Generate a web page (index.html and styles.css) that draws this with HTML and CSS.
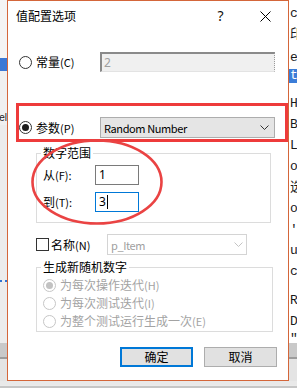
FILE: index.html
```html
<!DOCTYPE html>
<html lang="zh-CN">
<head>
<meta charset="utf-8">
<title>值配置选项</title>
<link rel="stylesheet" href="styles.css">
</head>
<body>
<div class="screen">
  <div class="bg-left">
    <div class="bl-top"></div>
    <div class="bl-sel"></div>
    <div class="bl-gap"></div>
    <div class="bl-text"><span>el</span></div>
    <div class="bl-fill"></div>
    <div class="bl-dots"></div>
    <div class="bl-fill2"></div>
    <div class="bl-bar"></div>
    <div class="bl-line"></div>
    <div class="bl-rest"></div>
  </div>

  <div class="dialog">
    <div class="titlebar">
      <span class="title">值配置选项</span>
      <span class="tb-btn help">?</span>
      <span class="tb-btn">
        <svg width="11" height="11" viewBox="0 0 11 11"><path d="M0.5 0.5 L10.5 10.5 M10.5 0.5 L0.5 10.5" stroke="#000" stroke-width="1" fill="none"/></svg>
      </span>
    </div>

    <div class="content">
      <div class="opt-row row-const">
        <label class="radio-label"><span class="radio"></span><span>常量<span class="mn">(C)</span></span></label>
        <div class="field-disabled">2</div>
      </div>

      <div class="opt-row row-param">
        <label class="radio-label"><span class="radio checked"></span><span>参数<span class="mn">(P)</span></span></label>
        <div class="combo">
          <span class="combo-text">Random Number</span>
          <svg class="chev" width="9" height="5" viewBox="0 0 9 5"><path d="M0.5 0.5 L4.5 4.5 L8.5 0.5" stroke="#333" stroke-width="1" fill="none"/></svg>
        </div>
      </div>

      <fieldset class="group group-range">
        <legend class="group-title">数字范围</legend>
        <div class="range-row">
          <span>从<span class="mn">(F):</span></span>
          <div class="num-input">1</div>
        </div>
        <div class="range-row">
          <span>到<span class="mn">(T):</span></span>
          <div class="num-input focus">3<span class="caret"></span></div>
        </div>
      </fieldset>

      <div class="name-row">
        <label class="check-label"><span class="checkbox"></span><span>名称<span class="mn">(N)</span></span></label>
        <div class="combo disabled">
          <span class="combo-text">p_Item</span>
          <svg class="chev" width="9" height="5" viewBox="0 0 9 5"><path d="M0.5 0.5 L4.5 4.5 L8.5 0.5" stroke="#c4c4c4" stroke-width="1" fill="none"/></svg>
        </div>
      </div>

      <fieldset class="group group-gen">
        <legend class="group-title">生成新随机数字</legend>
        <div class="gen-row"><span class="radio dis checked"></span><span>为每次操作迭代<span class="mn">(H)</span></span></div>
        <div class="gen-row"><span class="radio dis"></span><span>为每次测试迭代<span class="mn">(I)</span></span></div>
        <div class="gen-row"><span class="radio dis"></span><span>为整个测试运行生成一次<span class="mn">(E)</span></span></div>
      </fieldset>

      <div class="btn-row">
        <button class="btn default">确定</button>
        <button class="btn">取消</button>
      </div>
    </div>
  </div>

  <div class="bg-right">
    <div class="br-line br-first">ca</div>
    <div class="br-line">印</div>
    <div class="br-line br-tall">e_</div>
    <div class="br-line br-sel">ts</div>
    <div class="br-spacer"></div>
    <div class="br-line">H</div>
    <div class="br-line">B</div>
    <div class="br-line">L</div>
    <div class="br-line">o</div>
    <div class="br-line">选</div>
    <div class="br-line">o</div>
    <div class="br-line">'</div>
    <div class="br-line">u</div>
    <div class="br-line">c</div>
    <div class="br-spacer2"></div>
    <div class="br-line">R</div>
    <div class="br-line">DI</div>
    <div class="br-line br-cut">"</div>
    <div class="bl-bar"></div>
    <div class="bl-line"></div>
    <div class="bl-rest"></div>
  </div>

  <div class="bg-bottom"></div>

  <svg class="annot" width="297" height="388" viewBox="0 0 297 388">
    <rect x="17.5" y="104.5" width="269" height="36" fill="none" stroke="#ee3b3b" stroke-width="3"/>
    <ellipse cx="97" cy="182" rx="64.5" ry="41.5" fill="none" stroke="#ea4343" stroke-width="2.6"/>
  </svg>
</div>
</body>
</html>
```

FILE: styles.css
```css
* { box-sizing: border-box; }

html, body {
  margin: 0;
  padding: 0;
  background: #f0f0f0;
}

.screen {
  position: relative;
  width: 297px;
  height: 388px;
  display: grid;
  grid-template-columns: 7px 282px 8px;
  grid-template-rows: 381px 7px;
  overflow: hidden;
  font-family: "Noto Sans CJK SC", sans-serif;
}

/* ---------- background application (left) ---------- */
.bg-left {
  grid-column: 1;
  grid-row: 1;
  display: flex;
  flex-direction: column;
  background: #eeeeee;
}
.bl-top { height: 58px; background: #f4f4f4; }
.bl-sel { height: 13px; background: #3b78d5; }
.bl-gap { height: 40px; background: #f0f0f0; }
.bl-text {
  height: 14px;
  display: flex;
  justify-content: flex-end;
  overflow: hidden;
  white-space: nowrap;
  font-family: "Liberation Sans", sans-serif;
  font-size: 10px;
  line-height: 14px;
  color: #222;
  background: #f0f0f0;
}
.bl-fill { height: 155px; background: #ececec; }
.bl-dots { height: 2px; border-top: 2px dotted #2f72d0; }
.bl-fill2 { height: 61px; background: #ececec; }
.bl-bar { height: 14px; background: #c9c9c9; flex: none; }
.bl-line { height: 2px; background: #9c9c9c; flex: none; }
.bl-rest { flex: 1; background: #e4e4e4; }

/* ---------- background application (right) ---------- */
.bg-right {
  grid-column: 3;
  grid-row: 1;
  display: flex;
  flex-direction: column;
  background: #ffffff;
  overflow: hidden;
  font-family: "Liberation Mono", "Noto Sans CJK SC", monospace;
  font-size: 13px;
  color: #1a1a1a;
}
.br-line {
  height: 21px;
  line-height: 21px;
  white-space: nowrap;
  padding-left: 1px;
  flex: none;
}
.br-first { margin-top: 4px; height: 20px; line-height: 20px; }
.br-tall { height: 24px; line-height: 26px; }
.br-sel {
  height: 14px;
  line-height: 14px;
  background: #3b7dd8;
  color: #ffffff;
}
.br-spacer { height: 10px; flex: none; }
.br-spacer2 { height: 8px; flex: none; }
.br-cut { height: 11px; line-height: 14px; overflow: hidden; }

.bg-bottom {
  grid-column: 1 / 4;
  grid-row: 2;
  background: #ebebeb;
  border-top: 4px solid #e9e9e9;
  border-bottom: 2px solid #c6c6c6;
}

/* ---------- dialog ---------- */
.dialog {
  grid-column: 2;
  grid-row: 1;
  border: 1px solid #d4663a;
  background: #ffffff;
  display: flex;
  flex-direction: column;
  font-size: 12px;
  line-height: 14px;
  color: #000;
}

.titlebar {
  height: 30px;
  display: flex;
  align-items: center;
  flex: none;
}
.title {
  flex: 1;
  padding-left: 8px;
  font-size: 12px;
  line-height: 14px;
}
.tb-btn {
  width: 45px;
  height: 30px;
  display: flex;
  align-items: center;
  justify-content: center;
}
.help {
  font-family: "Noto Sans", sans-serif;
  font-size: 14px;
  color: #111;
}

.content {
  display: flex;
  flex-direction: column;
  padding: 0 11px;
}

.mn {
  font-size: 11px;
}

.opt-row {
  display: grid;
  grid-template-columns: 81px 175px;
  align-items: center;
}
.row-const { height: 20px; margin-top: 21px; }
.row-param { height: 21px; margin-top: 45px; }

.radio-label,
.check-label {
  display: flex;
  align-items: center;
  gap: 4px;
}
.check-label { gap: 2px; }

.radio {
  width: 13px;
  height: 13px;
  border-radius: 50%;
  border: 1px solid #333333;
  display: flex;
  align-items: center;
  justify-content: center;
  flex: none;
  background: #fff;
}
.radio.checked::after {
  content: "";
  width: 7px;
  height: 7px;
  border-radius: 50%;
  background: #1c1c1c;
}
.radio.dis { border-color: #c6c6c6; }
.radio.dis.checked::after { background: #c2c2c2; }

.checkbox {
  width: 13px;
  height: 13px;
  border: 1px solid #333333;
  background: #fff;
  flex: none;
}

.field-disabled {
  height: 20px;
  background: #f0f0f0;
  border-top: 2px solid #8a8a8a;
  border-left: 2px solid #8a8a8a;
  border-right: 1px dotted #9a9a9a;
  border-bottom: 1px solid #e3e3e3;
  color: #a0a0a0;
  padding-left: 2px;
  font-family: "Noto Sans", sans-serif;
  font-size: 12px;
  line-height: 17px;
}

.combo {
  height: 21px;
  background: #e5e5e5;
  border: 1px solid #adadad;
  display: flex;
  align-items: center;
  justify-content: space-between;
  padding: 0 5px 0 3px;
}
.combo-text {
  font-family: "Noto Sans CJK SC", sans-serif;
  font-size: 11px;
  line-height: 14px;
  letter-spacing: -0.4px;
}
.combo.disabled {
  background: #ffffff;
  border-color: #d4d4d4;
  color: #a0a0a0;
  padding-right: 3px;
}

/* group boxes */
.group {
  border: 1px solid #dcdcdc;
  margin: 0;
  min-width: 0;
}
.group-title {
  padding: 0 2px;
  margin-left: -2px;
  font-size: 12px;
  line-height: 14px;
}
.group-range {
  margin: 8px 0 0 17px;
  width: 235px;
  padding: 5px 6px 10px 6px;
  display: flex;
  flex-direction: column;
  gap: 7px;
}
.range-row {
  display: grid;
  grid-template-columns: 52px 44px;
  align-items: center;
  height: 20px;
}
.num-input {
  height: 20px;
  border: 1px solid #7a7a7a;
  padding-left: 3px;
  display: flex;
  align-items: center;
  font-family: "Noto Sans", sans-serif;
  font-size: 12px;
}
.num-input.focus { border-color: #0078d7; }
.caret {
  width: 1px;
  height: 14px;
  background: #000;
  margin-left: 1px;
}

.name-row {
  display: grid;
  grid-template-columns: 71px 140px;
  align-items: center;
  height: 21px;
  margin: 11px 0 0 17px;
}

.group-gen {
  margin: 5px 0 0 17px;
  width: 237px;
  padding: 2px 6px 1px 6px;
  display: flex;
  flex-direction: column;
}
.gen-row {
  height: 18px;
  display: flex;
  align-items: center;
  gap: 4px;
  color: #a3a3a3;
}

.btn-row {
  display: flex;
  justify-content: flex-end;
  gap: 11px;
  margin-top: 15px;
}
.btn {
  width: 73px;
  height: 20px;
  margin: 0;
  padding: 0;
  background: #e1e1e1;
  border: 1px solid #adadad;
  border-radius: 0;
  font-family: "Noto Sans CJK SC", sans-serif;
  font-size: 12px;
  line-height: 14px;
  color: #000;
  display: flex;
  align-items: center;
  justify-content: center;
}
.btn.default { border: 2px solid #0078d7; }

/* annotation overlay */
.annot {
  position: absolute;
  left: 0;
  top: 0;
  pointer-events: none;
}
```
